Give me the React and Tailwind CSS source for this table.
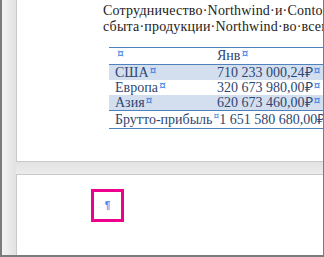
import React from 'react';

// Word-style document view: end of one page with a table, gap, and the next page
const rows = [
  { label: 'США', value: '710 233 000,24₽', shaded: true },
  { label: 'Европа', value: '320 673 980,00₽', shaded: false },
  { label: 'Азия', value: '620 673 460,00₽', shaded: true },
];

const CellMark = ({ small }) => (
  <span className={`inline-block align-top ml-[1px] text-[#3b7fe3] leading-[11px] font-['DejaVu_Sans',sans-serif] ${small ? 'text-[9px]' : 'text-[11px]'}`}>¤</span>
);

const Row = ({ label, value, shaded }) => (
  <div className={`flex h-[15px] leading-[15px] ${shaded ? 'bg-[#d3dfee]' : ''}`}>
    <div className="w-[107px] shrink-0 pl-[6px] whitespace-nowrap">{label}<CellMark /></div>
    <div className="pl-[1px] whitespace-nowrap">{value}<CellMark /></div>
  </div>
);

export default function App() {
  return (
    <div className="w-[324px] h-[257px] overflow-hidden flex border-l-2 border-r border-b-2 border-[#7b7b7b] bg-[#e8e8e8] font-['Liberation_Serif',serif]">
      {/* left gutter */}
      <div className="w-[14px] shrink-0 bg-gradient-to-r from-[#f3f3f3] to-[#e2e2e2]" />

      <div className="flex-1 flex flex-col min-w-0">
        {/* page 1 */}
        <div className="h-[162px] shrink-0 bg-white border-l border-b border-[#c9c9c9] overflow-hidden">
          <div className="pl-[86px] pt-[3px] text-[14px] leading-[16px] text-[#222] whitespace-nowrap tracking-[0.2px]">
            <div>Сотрудничество·Northwind·и·Contoso·по·</div>
            <div>сбыта·продукции·Northwind·во·всем·мире</div>
          </div>

          <div className="ml-[92px] mt-[12px] text-[14px] text-[#2e4672] border-t border-b border-[#4f81bd]">
            <div className="flex h-[16px] leading-[16px]">
              <div className="w-[107px] shrink-0 pl-[7px]"><CellMark /></div>
              <div className="pl-[1px] whitespace-nowrap">Янв<CellMark /></div>
            </div>
            <div className="border-t border-[#4f81bd]">
              {rows.map((r) => (
                <Row key={r.label} {...r} />
              ))}
            </div>
            <div className="flex h-[18px] leading-[17px] border-t border-[#4f81bd]">
              <div className="min-w-[107px] shrink-0 pl-[6px] whitespace-nowrap">Брутто-прибыль<CellMark small /></div>
              <div className="whitespace-nowrap">1 651 580 680,00₽<CellMark /></div>
            </div>
          </div>
        </div>

        {/* gap between pages */}
        <div className="h-[12px] shrink-0 bg-gradient-to-b from-[#e2e2e2] to-[#ececec]" />

        {/* page 2 */}
        <div className="flex-1 bg-white border-l border-t border-[#c9c9c9] pl-[74px] pt-[14px]">
          <div className="w-[33px] h-[33px] border-[3px] border-[#ec008c] flex items-center justify-center">
            <span className="text-[#3d8af7] text-[10px] leading-none font-['Liberation_Sans',sans-serif] font-bold">¶</span>
          </div>
        </div>
      </div>
    </div>
  );
}
